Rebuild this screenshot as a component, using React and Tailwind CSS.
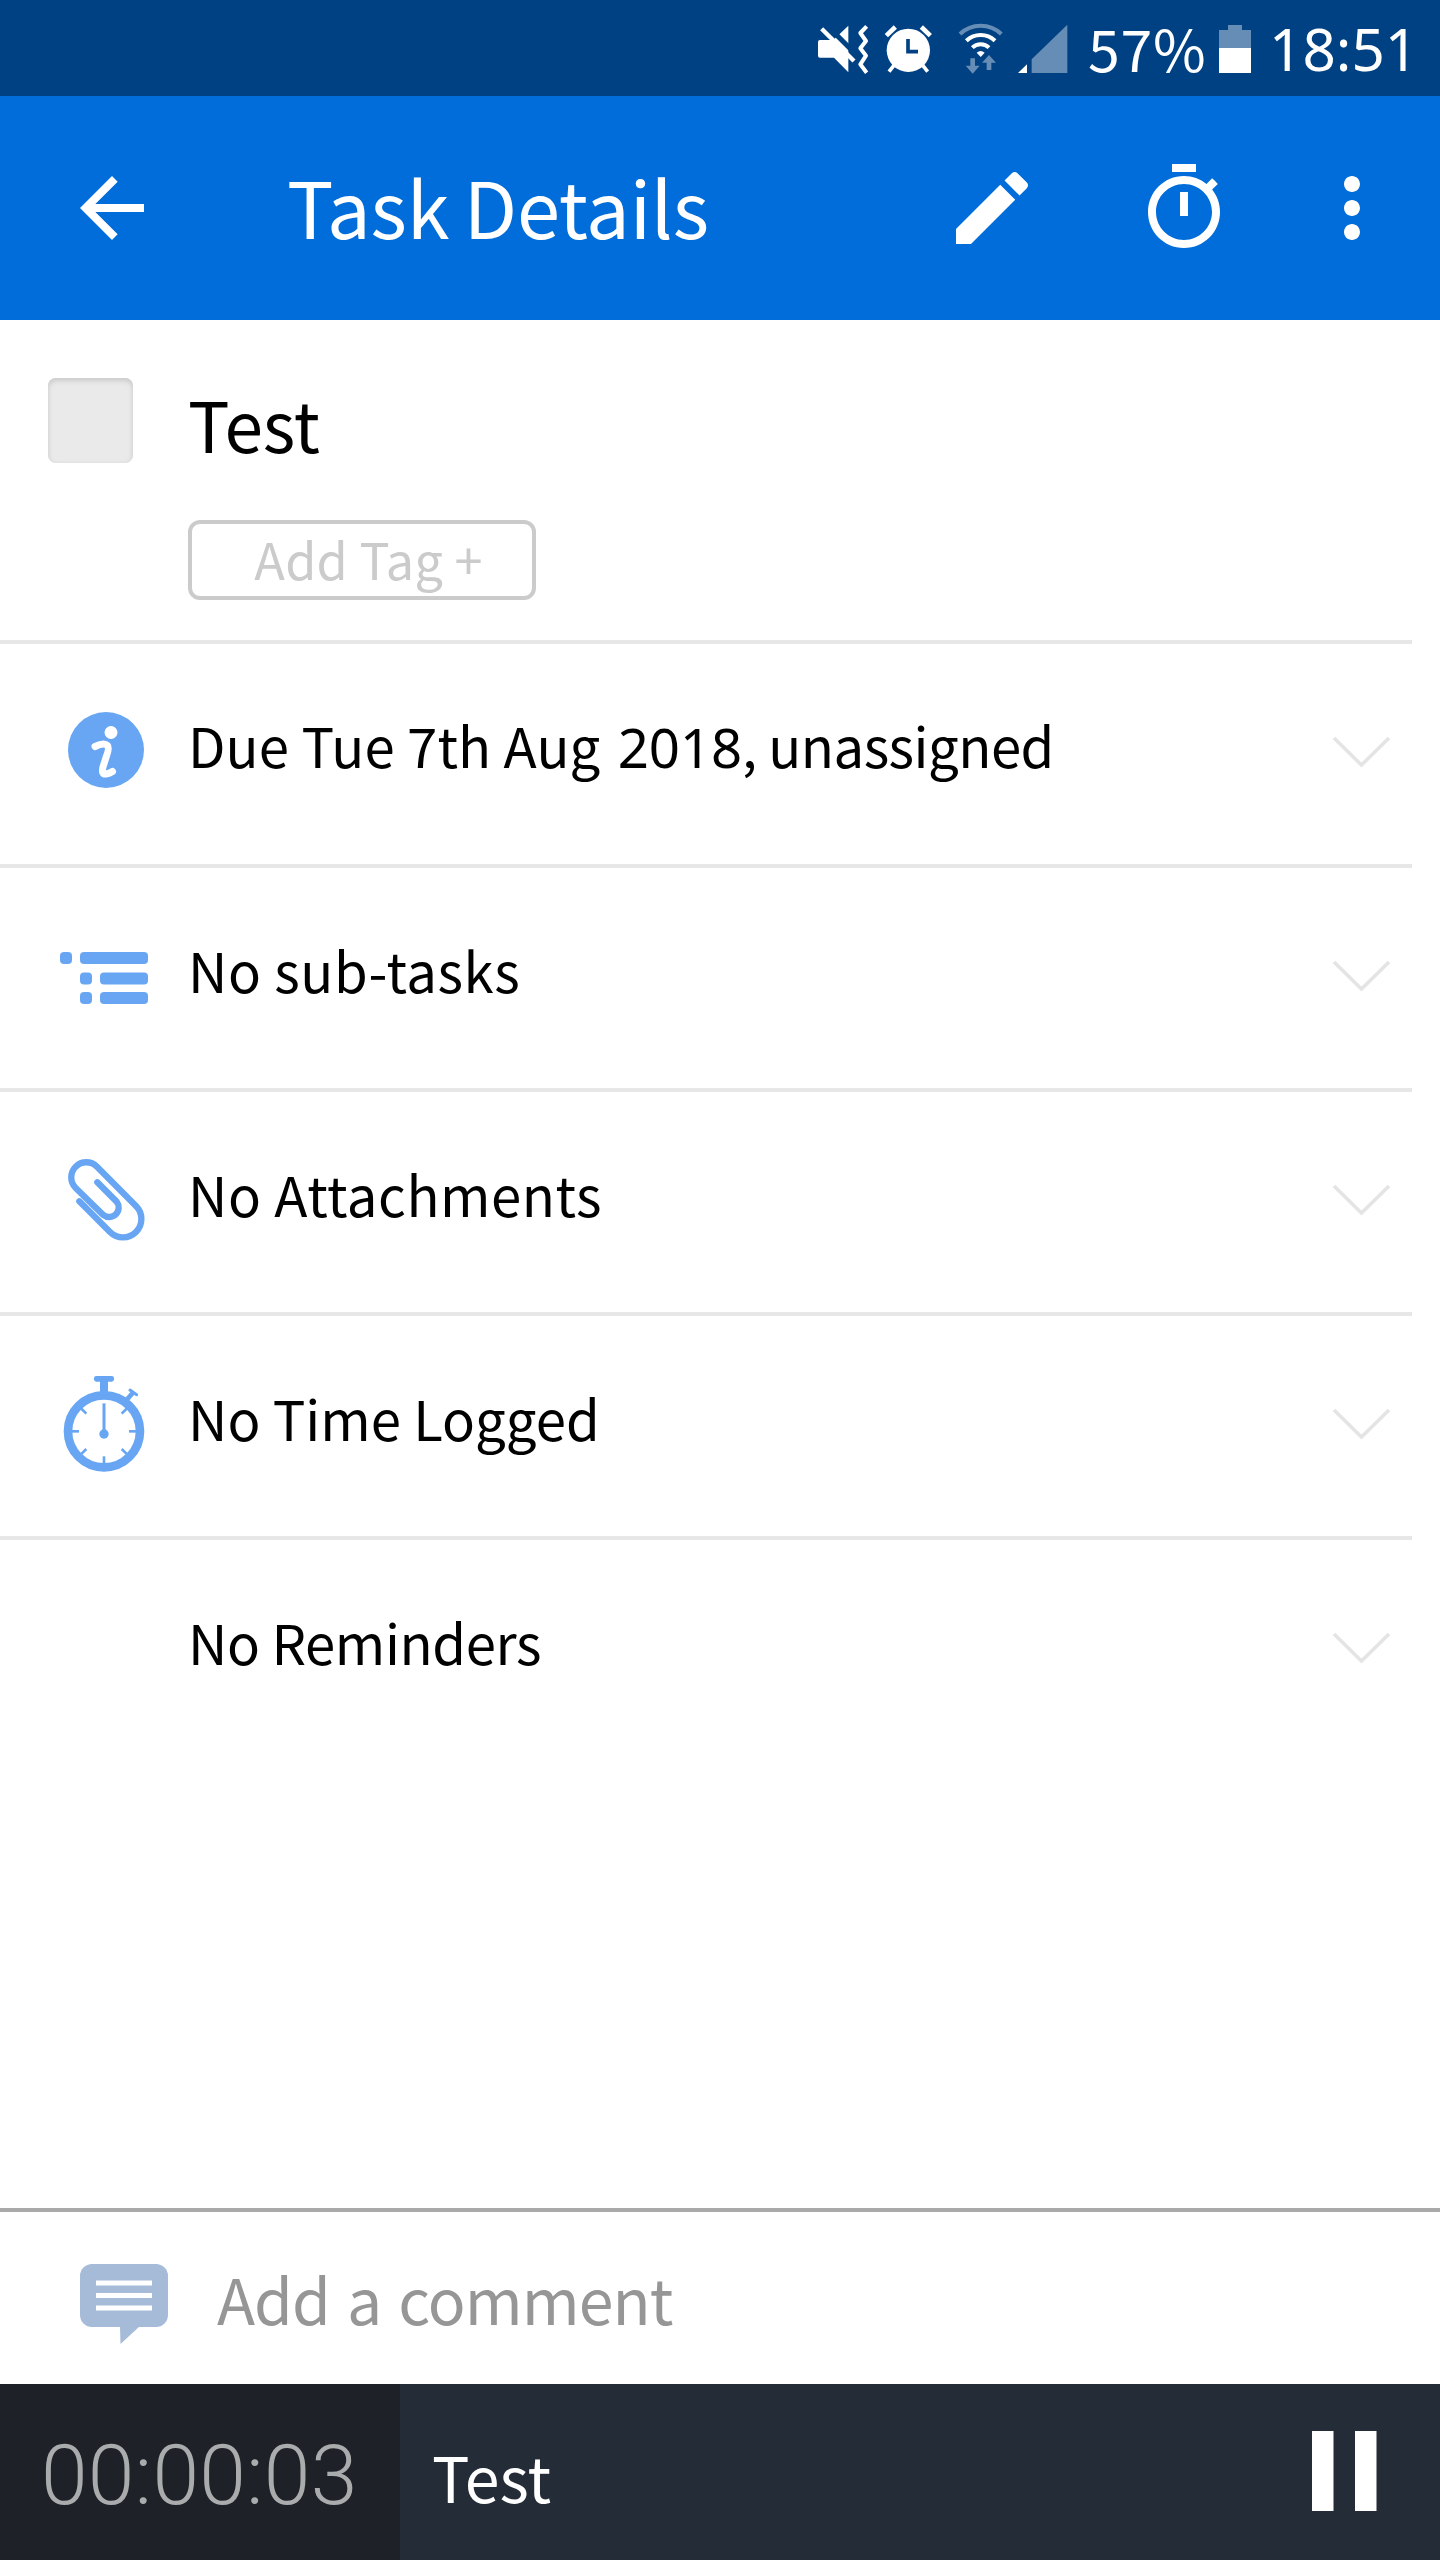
const WHITE = '#ffffff';
const FAINT = '#668db5';
const STATUS_BG = '#004183';
const ICON_BLUE = '#68a6f4';

// Status bar icons
function MuteIcon() {
    return (
        <svg className="h-[52px] w-[52px]" viewBox="24 21 156 156" fill="none">
            <path d="M30 75H70L115 32V172L72 128H30Q24 128 24 122V81Q24 75 30 75Z" fill={WHITE} />
            <path d="M46 26L148 128" stroke={STATUS_BG} strokeWidth="15" />
            <path d="M35 41L132 138" stroke={WHITE} strokeWidth="13" />
            <path d="M170 34L151 54L168 78L151 100L168 122L151 148L170 173" stroke={WHITE} strokeWidth="12" strokeLinejoin="round" />
        </svg>
    );
}

function AlarmIcon() {
    return (
        <svg className="ml-[14px] h-[52px] w-[49px]" viewBox="222 21 147 156" fill="none">
            <circle cx="295" cy="106" r="65" fill={WHITE} />
            <path d="M229 62L256 36M334 36L361 62" stroke={WHITE} strokeWidth="14" />
            <path d="M237 170L256 146M353 170L334 146" stroke={WHITE} strokeWidth="11" />
            <path d="M294 72V110H324" stroke={STATUS_BG} strokeWidth="11" />
        </svg>
    );
}

function WifiIcon() {
    return (
        <svg className="ml-[25px] h-[52px] w-[45px]" viewBox="444 21 135 156" fill="none">
            <path d="M450 57A90 90 0 0 1 574 57" stroke={FAINT} strokeWidth="12" />
            <path d="M469 77A63 63 0 0 1 555 77" stroke={WHITE} strokeWidth="12" />
            <path d="M487 98A36 36 0 0 1 537 98" stroke={WHITE} strokeWidth="12" />
            <path d="M500 113Q512 103 524 113L512 126Z" fill={WHITE} />
            <path d="M481 130H495V152H509L488 176L467 152H481Z" fill={FAINT} />
            <path d="M530 165H544V143H558L537 120L516 143H530Z" fill={FAINT} />
        </svg>
    );
}

function SignalIcon() {
    return (
        <svg className="ml-[14px] h-[52px] w-[51px]" viewBox="620 21 153 156">
            <path d="M623 174H650V148Z" fill={WHITE} />
            <path d="M664 174V133L771 29V174Z" fill={FAINT} />
        </svg>
    );
}

function BatteryIcon() {
    return (
        <svg className="h-[52px] w-[32px]" viewBox="0 0 32 52">
            <path d="M9 3H23V8H32V26H0V8H9Z" fill={FAINT} />
            <path d="M0 26H32V51H0Z" fill={WHITE} />
        </svg>
    );
}

// Toolbar icons
function ToolbarIcon({ path, className }) {
    return (
        <button className={className}>
            <svg className="h-24 w-24" viewBox="0 0 24 24" fill="currentColor">
                <path d={path} />
            </svg>
        </button>
    );
}

const BACK = 'M20 11H7.83l5.59-5.59L12 4l-8 8 8 8 1.41-1.41L7.83 13H20v-2z';
const EDIT = 'M3 17.25V21h3.75L17.81 9.94l-3.75-3.75L3 17.25zM20.71 7.04c.39-.39.39-1.02 0-1.41l-2.34-2.34c-.39-.39-1.02-.39-1.41 0l-1.83 1.83 3.75 3.75 1.83-1.83z';
const TIMER = 'M15 1H9v2h6V1zm-4 13h2V8h-2v6zm8.03-6.61l1.42-1.42c-.43-.51-.9-.99-1.41-1.41l-1.42 1.42C16.07 4.74 14.12 4 12 4c-4.97 0-9 4.03-9 9s4.02 9 9 9 9-4.03 9-9c0-2.12-.74-4.07-1.97-5.61zM12 20c-3.87 0-7-3.13-7-7s3.13-7 7-7 7 3.13 7 7-3.13 7-7 7z';
const MORE = 'M12 8c1.1 0 2-.9 2-2s-.9-2-2-2-2 .9-2 2 .9 2 2 2zm0 2c-1.1 0-2 .9-2 2s.9 2 2 2 2-.9 2-2-.9-2-2-2zm0 6c-1.1 0-2 .9-2 2s.9 2 2 2 2-.9 2-2-.9-2-2-2z';

// Row icons, all drawn in the same 188x120 cell
function InfoIcon() {
    return (
        <>
            <circle cx="106" cy="66" r="38" fill={ICON_BLUE} />
            <circle cx="111" cy="48.5" r="6.5" fill={WHITE} />
            <path d="M95 62.5Q104 58 107.5 61.5Q109.5 64 106.5 72L103 83Q101 90.5 106 90Q109.5 89.5 112.5 87.5" fill="none" stroke={WHITE} strokeWidth="7" strokeLinecap="round" />
        </>
    );
}

function SubtasksIcon() {
    return (
        <g fill={ICON_BLUE}>
            <rect x="60" y="44" width="12" height="12" rx="4" />
            <rect x="80" y="44" width="68" height="12" rx="4" />
            <rect x="80" y="64.5" width="12" height="12" rx="4" />
            <rect x="100" y="64.5" width="48" height="12" rx="4" />
            <rect x="80" y="84" width="12" height="12" rx="4" />
            <rect x="100" y="84" width="48" height="12" rx="4" />
        </g>
    );
}

function ClipIcon() {
    return (
        <path
            transform="translate(40 8) scale(0.3333)"
            d="M172 127L230 185A28.5 28.5 0 0 1 190 225L107 144A45 45 0 0 1 171 80L288 198A55 55 0 0 1 210 276L118 184"
            fill="none"
            stroke={ICON_BLUE}
            strokeWidth="19"
            strokeLinecap="round"
        />
    );
}

function StopwatchIcon() {
    return (
        <g transform="translate(40 4) scale(0.3333)" fill="none" stroke={ICON_BLUE}>
            <circle cx="192" cy="214" r="108" strokeWidth="26" />
            <path d="M192 60V100" strokeWidth="24" />
            <rect x="162" y="48" width="60" height="17" rx="7" fill={ICON_BLUE} stroke="none" />
            <path d="M258 122L280 97" strokeWidth="14" />
            <path d="M270 90L290 104" strokeWidth="9" strokeLinecap="round" />
            <path d="M192 130V222" strokeWidth="9" />
            <circle cx="192" cy="222" r="14" fill={ICON_BLUE} stroke="none" />
            {[45, 90, 135, 180, 225, 270, 315].map(deg => (
                <path key={deg} d="M192 116V139" strokeWidth="8" transform={`rotate(${deg} 192 214)`} />
            ))}
        </g>
    );
}

const rows = [
    { id: 'info', icon: InfoIcon, text: 'Due Tue 7th Aug ', year: '2018', rest: ', unassigned', tracking: 'tracking-[0.1px]' },
    { id: 'subtasks', icon: SubtasksIcon, text: 'No sub-tasks', tracking: 'tracking-[0.55px]' },
    { id: 'attachments', icon: ClipIcon, text: 'No Attachments', tracking: 'tracking-[0.55px]' },
    { id: 'time', icon: StopwatchIcon, text: 'No Time Logged', tracking: 'tracking-[0px]' },
    { id: 'reminders', icon: null, text: 'No Reminders', tracking: 'tracking-[-0.4px]' },
];

function DetailRow({ row, last }) {
    const Icon = row.icon;
    return (
        <div className={`mr-7 flex h-[224px] items-center border-b-4 pb-5 ${last ? 'border-transparent' : 'border-[#e7e7e7]'}`}>
            <svg className="h-[120px] w-[188px] shrink-0" viewBox="0 0 188 120">
                {Icon && <Icon />}
            </svg>
            <span className={`flex-1 whitespace-pre pt-1 text-[54.5px] leading-[80px] text-black ${row.tracking}`}>
                {row.text}
                {row.year && <span className="ml-[5px] font-['Noto_Sans'] tracking-[-0.1px]">{row.year}</span>}
                {row.rest && <span className="tracking-[-0.55px]">{row.rest}</span>}
            </span>
            <svg className="mr-5 h-12 w-[61px]" viewBox="0 0 61 48" fill="none">
                <path d="M3 18L30.5 45L58 18" stroke="#e4e4e4" strokeWidth="3.5" />
            </svg>
        </div>
    );
}

export default function App() {
    return (
        <div className="flex h-[2560px] w-[1440px] flex-col overflow-hidden bg-white font-['Noto_Sans_CJK_SC','Noto_Sans',sans-serif]">
            {/* Status bar */}
            <div className="flex h-24 items-center bg-[#004183] pl-[818px] text-white">
                <MuteIcon />
                <AlarmIcon />
                <WifiIcon />
                <SignalIcon />
                <span className="ml-5 w-[131px] whitespace-nowrap pb-0.5 text-[57.2px] leading-[80px] tracking-[0.7px]">57%</span>
                <BatteryIcon />
                <span className="ml-[18px] whitespace-nowrap pt-0.5 font-['Noto_Sans'] text-[58.4px] leading-[80px]">18:51</span>
            </div>

            {/* Toolbar */}
            <div className="flex h-[224px] items-center bg-[#006dda] pl-16 text-white">
                <ToolbarIcon path={BACK} />
                <h1 className="ml-[127px] flex-1 whitespace-nowrap pb-1.5 text-[77.6px] leading-[100px] tracking-[-0.15px] [word-spacing:-3px]">Task Details</h1>
                <ToolbarIcon path={EDIT} />
                <ToolbarIcon path={TIMER} className="ml-24" />
                <ToolbarIcon path={MORE} className="mr-10 ml-[72px]" />
            </div>

            {/* Task title and tags */}
            <div className="mr-7 flex h-[324px] items-start border-b-4 border-[#e7e7e7] pl-12">
                <div className="mt-[58px] h-[85px] w-[85px] rounded-lg bg-[#eaeaea] shadow-[inset_0_3px_5px_#cccccc,inset_0_0_4px_#dedede]"></div>
                <div className="ml-[55px] pt-[63px]">
                    <p className="text-[69.4px] leading-[80px] text-black">Test</p>
                    <button className="mt-[57px] flex h-20 w-[348px] items-center justify-center rounded-xl border-4 border-[#cbcbcb] pr-1 pb-0.5 pl-[17px] text-[50.4px] leading-[64px] tracking-[0.2px] text-[#cbcbcb]">
                        Add Tag +
                    </button>
                </div>
            </div>

            {/* Details */}
            <div className="flex-1">
                {rows.map((row, index) => (
                    <DetailRow key={row.id} row={row} last={index === rows.length - 1} />
                ))}
            </div>

            {/* Comment */}
            <div className="flex h-[176px] items-center border-t-4 border-[#a9a9a9] pl-20">
                <svg className="mt-3 h-20 w-[88px]" viewBox="0 0 88 80">
                    <rect width="88" height="63" rx="12" fill="#a5bbd8" />
                    <path d="M40 62H60L40.5 80Z" fill="#a5bbd8" />
                    <path d="M16 19H72M16 31.5H72M16 44H72" stroke={WHITE} strokeWidth="5" />
                </svg>
                <span className="ml-[49px] whitespace-nowrap text-[62.6px] leading-[80px] tracking-[-0.95px] text-[#969696] [word-spacing:4px]">Add a comment</span>
            </div>

            {/* Running timer */}
            <div className="flex h-[176px] bg-[#242c37]">
                <div className="flex w-[400px] items-center bg-[#1e2128] pt-2 pl-[41px]">
                    <span className="whitespace-nowrap font-['Roboto'] text-[84px] leading-[100px] font-light tracking-[0.2px] text-[#a9abac]">00:00:03</span>
                </div>
                <div className="flex flex-1 items-center justify-between pl-8">
                    <span className="pt-2 text-[62.6px] leading-[80px] text-white">Test</span>
                    <svg className="mr-16 h-20 w-16 overflow-visible" viewBox="0 0 64 80" fill={WHITE}>
                        <path d="M0 -1H21.5V79H0ZM43 -1H64.5V79H43Z" />
                    </svg>
                </div>
            </div>
        </div>
    );
}
